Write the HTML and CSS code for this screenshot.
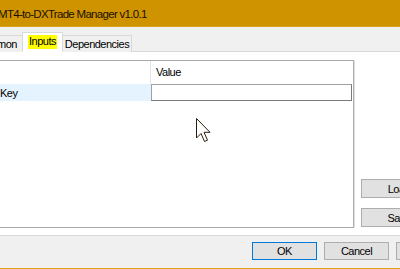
FILE: index.html
```html
<!DOCTYPE html>
<html>
<head>
<meta charset="utf-8">
<link rel="stylesheet" href="styles.css">
</head>
<body>
<div class="window">
  <div class="titlebar"><span class="title">MT4-to-DXTrade Manager v1.0.1</span></div>
  <div class="tabstrip">
    <div class="tab tab-first">mon</div>
    <div class="tab tab-active"><span class="hl">Inputs</span></div>
    <div class="tab">Dependencies</div>
  </div>
  <div class="tabpage">
    <div class="listview">
      <div class="lv-header">
        <div class="lv-col lv-col1"></div>
        <div class="lv-col lv-col2">Value</div>
      </div>
      <div class="lv-row">
        <div class="lv-key">Key</div>
        <div class="lv-value"><div class="textbox"></div></div>
      </div>
    </div>
    <div class="side">
      <button class="btn side-btn">Load</button>
      <button class="btn side-btn">Save</button>
    </div>
  </div>
  <div class="footer">
    <button class="btn foot-btn btn-default">OK</button>
    <button class="btn foot-btn">Cancel</button>
    <button class="btn foot-btn">Reset</button>
  </div>
  <svg class="cursor" width="16" height="25" viewBox="0 0 16 25">
    <path d="M0.5 0.5 L0.5 20 L5 15.5 L8.5 23.5 L11.5 22.2 L8 14.3 L14 14.3 Z" fill="#fff" stroke="#2b1b0a" stroke-width="1" stroke-linejoin="miter"/>
  </svg>
</div>
</body>
</html>
```
FILE: styles.css
```css
* { box-sizing: border-box; }
html, body { margin: 0; padding: 0; }
body {
  width: 400px;
  height: 269px;
  overflow: hidden;
  background: #f0f0f0;
  font-family: "Liberation Sans", Arial, sans-serif;
  font-size: 11px;
  letter-spacing: -0.5px;
  color: #000;
}
.window {
  position: relative;
  width: 400px;
  height: 269px;
  display: flex;
  flex-direction: column;
  border-bottom: 1px solid #d9a31a;
}
.titlebar {
  height: 27px;
  flex: none;
  background: #cf9300;
  display: flex;
  align-items: center;
  border-bottom: 1px solid #d8a21c;
}
.title {
  margin-left: -2px;
  font-size: 11.5px;
  letter-spacing: -0.7px;
  color: #1a1000;
  padding-top: 1px;
}
.tabstrip {
  height: 25px;
  flex: none;
  display: flex;
  align-items: flex-end;
  background: #f0f0f0;
  border-bottom: 1px solid #d9d9d9;
  padding-left: 0;
}
.tab {
  height: 17px;
  margin-bottom: -1px;
  padding: 0 4px;
  display: flex;
  align-items: center;
  border: 1px solid #d9d9d9;
  border-bottom: none;
  background: #f0f0f0;
  line-height: 1;
}
.tab-first {
  width: 23px;
  padding: 0;
  border-left: none;
  justify-content: flex-end;
  padding-right: 5px;
}
.tab-active {
  height: 20px;
  width: 41px;
  margin-left: -1px;
  margin-right: -1px;
  background: #fff;
  border-bottom: 1px solid #fff;
  justify-content: center;
  position: relative;
  z-index: 1;
  padding: 0;
}
.hl {
  background: #ffff00;
  padding: 1px 1px 2px 1px;
}
.tab-active + .tab { width: 70px; justify-content: center; }
.tabpage {
  height: 184px;
  flex: none;
  background: #fff;
  display: flex;
  padding-top: 8px;
  border-bottom: 1px solid #dadada;
}
.listview {
  width: 355px;
  height: 168px;
  border: 1px solid #a8a8a8;
  border-left: none;
  border-right-color: #b0b0b0;
  box-shadow: 1px 0 0 #dedede;
  background: #fff;
  display: flex;
  flex-direction: column;
}
.lv-header {
  height: 23px;
  display: flex;
}
.lv-col { height: 100%; display: flex; align-items: center; }
.lv-col1 { width: 151px; border-right: 1px solid #e5e5e5; }
.lv-col2 { padding-left: 5px; padding-bottom: 2px; }
.lv-row {
  height: 17px;
  display: flex;
}
.lv-key {
  width: 151px;
  background: #e5f3ff;
  display: flex;
  align-items: center;
  padding-left: 0;
}
.lv-value { width: 202px; }
.textbox {
  height: 17px;
  width: 201px;
  border: 1px solid #7a7a7a;
  border-top-color: #a0a0a0;
  border-left-color: #a0a0a0;
  background: #fff;
}
.side {
  display: flex;
  flex-direction: column;
  justify-content: flex-end;
  gap: 10px;
  padding-left: 7px;
  padding-bottom: 1px;
  height: 168px;
}
.btn {
  font-family: "Liberation Sans", Arial, sans-serif;
  font-size: 11px;
  letter-spacing: -0.5px;
  color: #000;
  background: #e1e1e1;
  border: 1px solid #adadad;
  padding: 0;
  margin: 0;
  display: flex;
  align-items: center;
  justify-content: center;
}
.side-btn { width: 76px; height: 19px; flex: none; }
.footer {
  flex: 1;
  display: flex;
  align-items: flex-start;
  padding-top: 6px;
  padding-left: 252px;
  gap: 7px;
  background: #f0f0f0;
}
.foot-btn { width: 65px; height: 18px; flex: none; }
.btn-default { border-color: #0078d7; }
.cursor {
  position: absolute;
  left: 196px;
  top: 118px;
}
```
